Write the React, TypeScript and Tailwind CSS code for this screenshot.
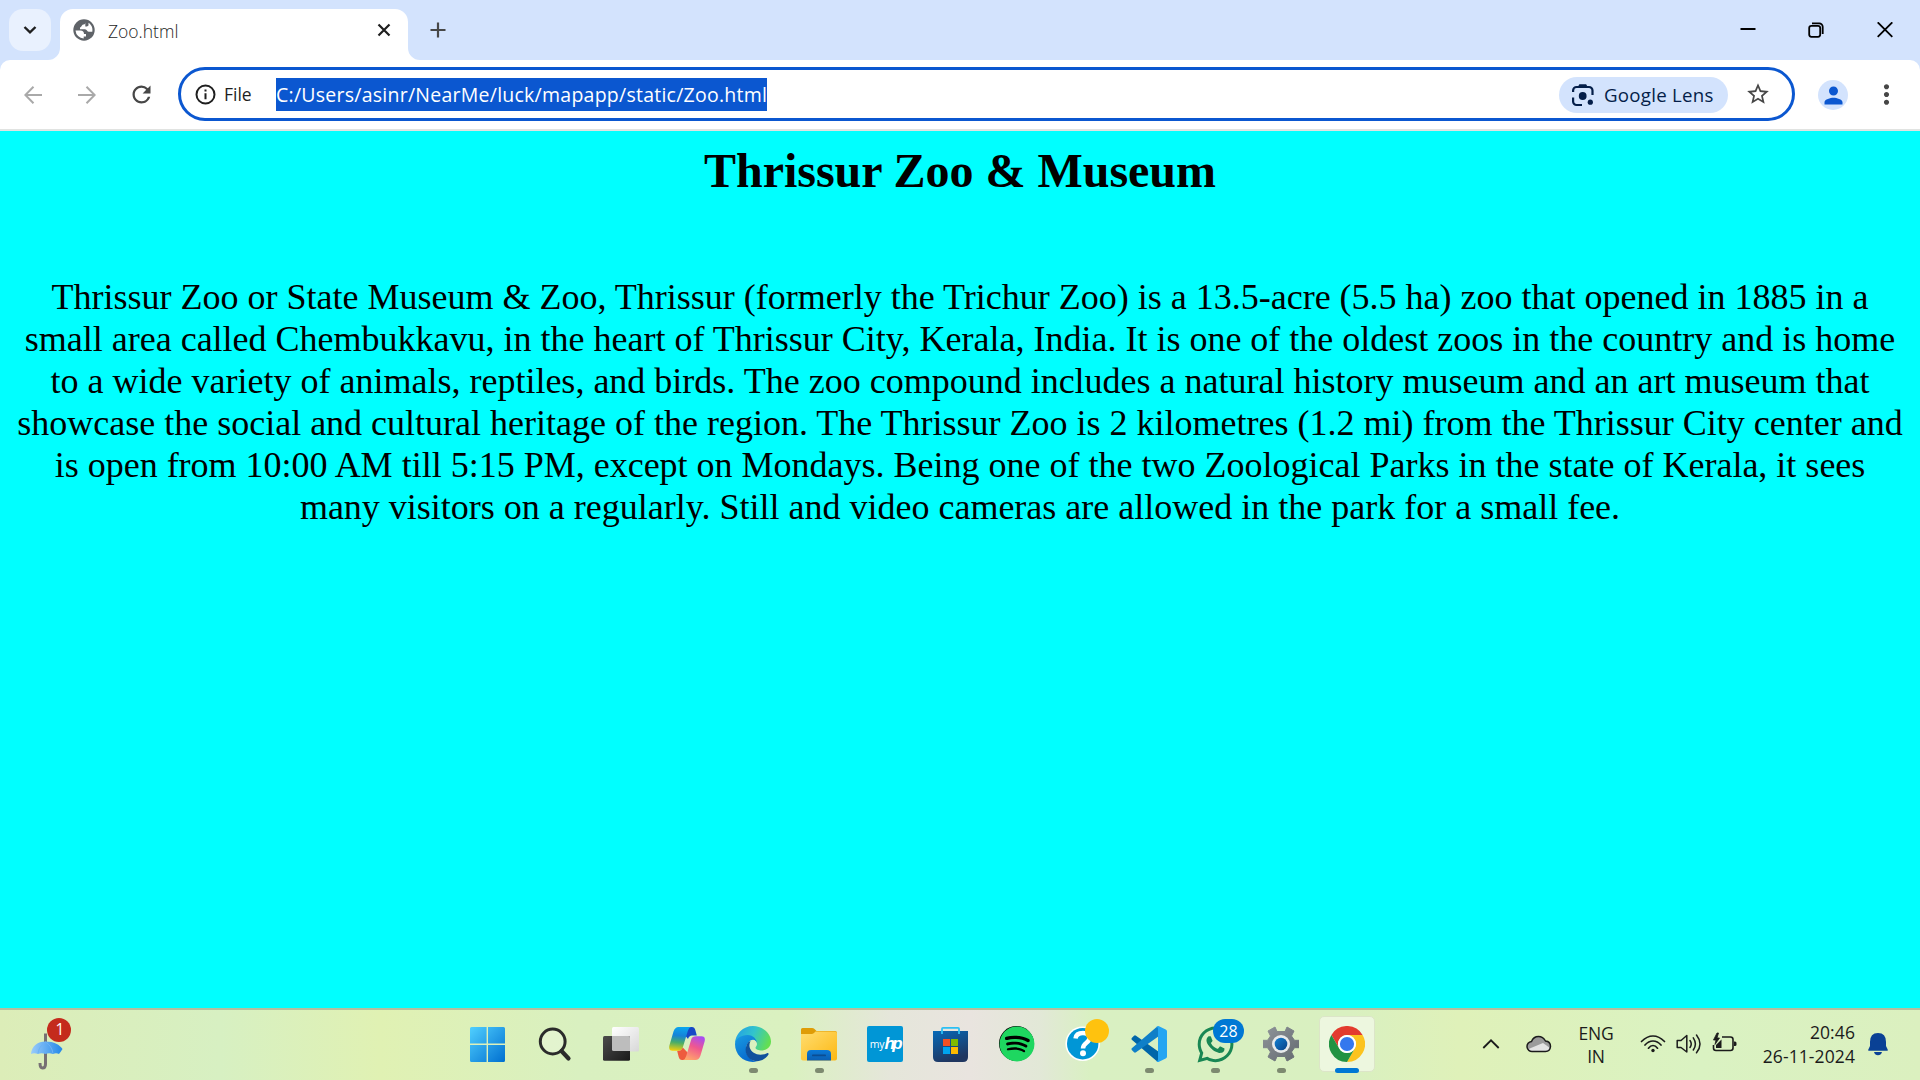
import React from "react";
import { MdRefresh, MdPerson, MdStarBorder, MdMoreVert } from "react-icons/md";
import { FaSpotify, FaWhatsapp } from "react-icons/fa";

const UI = "font-['Open_Sans','Noto_Sans',sans-serif]";

const LINES = [
  "Thrissur Zoo or State Museum & Zoo, Thrissur (formerly the Trichur Zoo) is a 13.5-acre (5.5 ha) zoo that opened in 1885 in a",
  "small area called Chembukkavu, in the heart of Thrissur City, Kerala, India. It is one of the oldest zoos in the country and is home",
  "to a wide variety of animals, reptiles, and birds. The zoo compound includes a natural history museum and an art museum that",
  "showcase the social and cultural heritage of the region. The Thrissur Zoo is 2 kilometres (1.2 mi) from the Thrissur City center and",
  "is open from 10:00 AM till 5:15 PM, except on Mondays. Being one of the two Zoological Parks in the state of Kerala, it sees",
  "many visitors on a regularly. Still and video cameras are allowed in the park for a small fee.",
];

function TitleBar() {
  return (
    <header className="flex h-[60px] w-full items-start bg-[#d3e3fd]">
      <button className="mt-[9px] ml-[9px] flex h-[42px] w-[42px] items-center justify-center rounded-[14px] bg-[#e9f1fe]">
        <svg width="14" height="10" viewBox="0 0 14 10" fill="none" stroke="#1f1f1f" strokeWidth="2.4"><path d="M1.5 2 7 7.3 12.500 2" /></svg>
      </button>
      <svg className="mt-[48px] -ml-[3px]" width="12" height="12" viewBox="0 0 12 12"><path d="M12 0A12 12 0 0 1 0 12H12Z" fill="#fff" /></svg>
      <div className="mt-[9px] flex h-[51px] w-[348px] rounded-t-[13px] bg-white">
        <svg className="mt-[10px] ml-[13px] shrink-0" width="22" height="22" viewBox="0 0 22 22">
          <circle cx="11" cy="11" r="10.700" fill="#5f6368" />
          <path d="M2.500 11.500H7.500C9.800 11.500 11 12.700 11 15H13V17.500H10.700V19.500A8.700 8.700 0 0 1 2.500 11.500Z" fill="#fff" />
          <path d="M12.500 2.700C12.500 5 11.500 5.500 10 5.500C8.500 6 8.800 8.200 7 8.500V10.200H12C14 10.200 14 12.800 16 12.800H19.300C20 9 18.500 5.500 15.500 3.700V6.500L14 7.500H12.300V5.500Z" fill="#fff" />
        </svg>
        <span className={`mt-[8px] ml-[13px] text-[17.500px] leading-[29px] font-light text-[#1f1f1f] ${UI}`}>Zoo.html</span>
        <svg className="mt-[14px] mr-[17px] ml-auto" width="14" height="14" viewBox="0 0 14 14" stroke="#1f1f1f" strokeWidth="2.200"><path d="m1.500 1.500 11 11m0-11-11 11" /></svg>
      </div>
      <svg className="mt-[48px]" width="12" height="12" viewBox="0 0 12 12"><path d="M0 0A12 12 0 0 0 12 12H0Z" fill="#fff" /></svg>
      <svg className="mt-[22px] ml-[10px]" width="16" height="16" viewBox="0 0 16 16" stroke="#474747" strokeWidth="2.200"><path d="M8 .5v15M.5 8h15" /></svg>
      <div className="mt-[22px] mr-[27px] ml-auto flex items-start text-black">
        <svg width="16" height="16" viewBox="0 0 16 16" stroke="currentColor" strokeWidth="2"><path d="M.5 7h15" /></svg>
        <svg className="ml-[52px]" width="16" height="16" viewBox="0 0 16 16" fill="none" stroke="currentColor" strokeWidth="1.800"><rect x="1.200" y="3.900" width="11" height="10.900" rx="2.200" /><path d="M4 1.300H11.200A3.500 3.500 0 0 1 14.700 4.800V12" /></svg>
        <svg className="ml-[53px]" width="16" height="16" viewBox="0 0 16 16" stroke="currentColor" strokeWidth="1.800"><path d="m.7.300 14.600 14.600M15.300.300.7 14.900" /></svg>
      </div>
    </header>
  );
}

function Toolbar() {
  return (
    <div className="bg-[#d3e3fd]">
      <div className="flex h-[71px] w-full items-start rounded-t-[10px] border-b-2 border-[#e1e3e1] bg-white">
        <svg className="mt-[26px] ml-[24px]" width="18" height="18" viewBox="0 0 18 18" fill="none" stroke="#a9a9a9" strokeWidth="2"><path d="M18 9H1.500M9.500.800 1.300 9l8.200 8.200" /></svg>
        <svg className="mt-[26px] ml-[36px]" width="18" height="18" viewBox="0 0 18 18" fill="none" stroke="#a9a9a9" strokeWidth="2"><path d="M0 9h16.500M8.500.800 16.700 9l-8.200 8.200" /></svg>
        <MdRefresh className="mt-[21px] ml-[32px] text-[#474747]" size={27} />
        <div className="mt-[7px] ml-[23px] flex h-[54px] w-[1617px] items-center rounded-full border-[3px] border-[#0b57d0] bg-white">
          <svg className="ml-[14px]" width="21" height="21" viewBox="0 0 21 21" fill="none" stroke="#1f1f1f" strokeWidth="2"><circle cx="10.500" cy="10.500" r="9" /><path d="M10.500 9.300v6M10.500 5.500v2" /></svg>
          <span className={`mt-px ml-[8px] w-[27px] text-[17.500px] whitespace-nowrap text-[#1f1f1f] ${UI}`}>File</span>
          <span className={`ml-[25px] h-[33px] w-[491px] bg-[#0b57d0] text-[19.500px] leading-[33px] tracking-[0.250px] whitespace-nowrap text-white ${UI}`}>C:/Users/asinr/NearMe/luck/mapapp/static/Zoo.html</span>
          <div className="mt-px mr-[17px] ml-auto flex h-[36px] w-[169px] items-center rounded-full bg-[#d3e3fd] text-[#041e49]">
            <svg className="ml-[12px]" width="24" height="24" viewBox="0 0 24 24" fill="none" stroke="currentColor" strokeWidth="2.200">
              <path d="M2.100 9V7.500A3.500 3.500 0 0 1 5.600 4H18A3.500 3.500 0 0 1 21.500 7.500V12M2.100 14.500V18.500A3.500 3.500 0 0 0 5.600 22H11" />
              <path d="M8 4 9 2.300h5.500L15.500 4" /><circle cx="11.700" cy="13" r="3.900" fill="currentColor" stroke="none" /><circle cx="19.300" cy="19.200" r="2.600" fill="currentColor" stroke="none" />
            </svg>
            <span className={`mt-px ml-[9px] text-[18.700px] tracking-[0.250px] whitespace-nowrap ${UI}`}>Google Lens</span>
          </div>
          <MdStarBorder className="mr-[21px] text-[#474747]" size={26} />
        </div>
        <div className="mt-[20px] ml-[23px] flex h-[30px] w-[30px] items-center justify-center rounded-full bg-[#d3e3fd]"><MdPerson className="text-[#0b57d0]" size={27} /></div>
        <MdMoreVert className="mt-[19px] ml-[23px] text-[#474747]" size={31} />
      </div>
    </div>
  );
}

const icon = { width: 36, height: 36, viewBox: "0 0 36 36" };

function StartIcon() {
  return (
    <svg {...icon}>
      <defs><linearGradient id="st" x1="1" y1="1" x2="36" y2="36" gradientUnits="userSpaceOnUse"><stop stopColor="#50d0ff" /><stop offset="1" stopColor="#006fd0" /></linearGradient></defs>
      <path fill="url(#st)" d="M2.500 1H17.600V17.600H1V2.500Q1 1 2.500 1ZM19 1H34.500Q36 1 36 2.500V17.600H19ZM1 19H17.600V36H2.500Q1 36 1 34.500ZM19 19H36V34.500Q36 36 34.500 36H19Z" />
    </svg>
  );
}
function SearchIcon() {
  return <svg {...icon} fill="none" stroke="#2b2b2b"><circle cx="15.700" cy="15.500" r="12.400" strokeWidth="3" fill="#fff" fillOpacity=".25" /><path d="m24.500 25 7 7.500" strokeWidth="4.200" strokeLinecap="round" /></svg>;
}
function TaskViewIcon() {
  return (
    <svg {...icon}>
      <defs>
        <linearGradient id="tv" x1="0" y1="0" x2="1" y2="1"><stop stopColor="#4c4c4c" /><stop offset="1" stopColor="#191919" /></linearGradient>
        <linearGradient id="tw" x1="0" y1="0" x2="1" y2="1"><stop stopColor="#fff" /><stop offset="1" stopColor="#d8d8d8" /></linearGradient>
      </defs>
      <rect x="9" y="1" width="27" height="24.500" rx="1.500" fill="url(#tw)" /><rect y="10" width="27" height="24.700" rx="1.500" fill="url(#tv)" /><path d="M9 10H25.500Q27 10 27 11.500V25H10.500Q9 25 9 23.500Z" fill="#bdbdbd" />
    </svg>
  );
}
function CopilotIcon() {
  return (
    <svg {...icon}>
      <defs>
        <linearGradient id="ca" x1=".4" y1="0" x2=".3" y2="1"><stop stopColor="#0ba5ee" /><stop offset=".35" stopColor="#1583d8" /><stop offset=".65" stopColor="#49ad68" /><stop offset="1" stopColor="#f5cf0b" /></linearGradient>
        <linearGradient id="cb" x1=".7" y1="0" x2=".3" y2="1"><stop stopColor="#a94df0" /><stop offset=".45" stopColor="#f0588e" /><stop offset="1" stopColor="#ffa66a" /></linearGradient>
      </defs>
      <path d="M17 1H23Q25.500 1 26.300 4L27.800 9.500H23Q20 9.500 19 13L15 8Z" fill="#1748c6" />
      <path d="M9.500 1H22Q19.800 1.500 18.800 5L13.800 21.500Q12.800 24.800 9 24.800H3.500Q-.8 24.800.4 19.500L4.500 5.500Q6 1 9.500 1Z" fill="url(#ca)" />
      <path d="M19 34H13Q10.500 34 9.700 31L8.200 25Q12.600 25 13.800 21.500L19 27Z" fill="#ee5b3e" />
      <path d="M26.500 34H14Q16.200 33.500 17.200 30L22.200 13.500Q23.200 10.200 27 10.200H32.500Q36.800 10.200 35.600 15.500L31.500 29.500Q30 34 26.500 34Z" fill="url(#cb)" />
    </svg>
  );
}
function EdgeIcon() {
  return (
    <svg {...icon}>
      <defs>
        <linearGradient id="ea" x1="0" y1=".2" x2="1" y2=".5"><stop stopColor="#229fe6" /><stop offset=".5" stopColor="#32c4cc" /><stop offset="1" stopColor="#64df50" /></linearGradient>
        <linearGradient id="eb" x1="0" y1="0" x2=".5" y2="1"><stop stopColor="#1a9ce2" /><stop offset="1" stopColor="#0669cd" /></linearGradient>
      </defs>
      <path d="M0 18C0 8 8 0 18 0S36 7.500 36 15.500C36 21 31.500 24.500 27 24.500C23.500 24.500 20.500 23.500 20.500 21.800C20.500 20.600 22 20 22 18C22 14.500 18 11 12 11C6 11 1 14 0 18Z" fill="url(#ea)" />
      <path d="M0 18C.5 12.500 6 9 12.500 9C18.500 9 22 13.500 22 17.800C22 15.500 20 13.800 18 13.800C14.500 13.800 11 18.500 11 23C11 29.500 16 35 22 35.500C10 38 0 29.500 0 18Z" fill="url(#eb)" />
      <path d="M13.500 16C10.500 19.500 8.500 27 14.500 32.500C21 38 30 34.500 33.500 28.500C34 27.300 33 26.700 32 27.200C25 30.500 16.500 28 14.700 21.500C14.200 19.200 14.400 17.500 15.500 15Z" fill="#10519d" />
    </svg>
  );
}
function ExplorerIcon() {
  return (
    <svg {...icon}>
      <defs><linearGradient id="fa" x1="0" y1="0" x2="1" y2="1"><stop stopColor="#ffdd70" /><stop offset="1" stopColor="#fdb813" /></linearGradient><linearGradient id="fb" x1="0" y1="0" x2="0" y2="1"><stop stopColor="#0a7ad8" /><stop offset="1" stopColor="#0c5fb2" /></linearGradient></defs>
      <path d="M0 3.500Q0 2 1.500 2H11Q12.500 2 13.500 3L15.500 5H34Q36 5 36 7V15H0Z" fill="#df9c07" />
      <path d="M0 8H10.500Q12 8 13 7L14.500 5.500H34Q36 5.500 36 7.500V32.500Q36 34.500 34 34.500H2Q0 34.500 0 32.500Z" fill="url(#fa)" />
      <path d="M6 34.500V28Q6 24 10 24H26Q30 24 30 28V34.500Z" fill="url(#fb)" /><rect x="11" y="28.500" width="14" height="1.800" rx=".9" fill="#0b4d92" />
    </svg>
  );
}
function MyHpIcon() {
  return (
    <div className="flex h-[36px] w-[36px] items-center justify-center rounded-[2px] bg-[#0096d6] text-white">
      <span className="mt-[1px] font-['Open_Sans',sans-serif] text-[10.500px] leading-none tracking-[-0.2px]">my</span>
      <span className="-mt-[1px] inline-block font-['Liberation_Sans_Narrow','Liberation_Sans',sans-serif] text-[17px] leading-none font-bold tracking-[-2.500px] italic">hp</span>
    </div>
  );
}
function StoreIcon() {
  return (
    <svg {...icon}>
      <defs><linearGradient id="sa" x1="0" y1="0" x2=".4" y2="1"><stop stopColor="#0669b8" /><stop offset="1" stopColor="#203660" /></linearGradient></defs>
      <path d="M0 5H35V31Q35 36 30 36H5Q0 36 0 31Z" fill="url(#sa)" />
      <path d="M9 8V2.800Q9 1.800 10 1.800H25Q26 1.800 26 2.800V8" fill="none" stroke="#2cc0f4" strokeWidth="1.800" />
      <path d="M10 13h7v7h-7z" fill="#f25022" /><path d="M18 13h7v7h-7z" fill="#7fba00" /><path d="M10 21h7v7h-7z" fill="#00a4ef" /><path d="M18 21h7v7h-7z" fill="#ffb900" />
    </svg>
  );
}
function SpotifyIcon() {
  return <div className="flex h-[35px] w-[35px] items-center justify-center rounded-full bg-black"><FaSpotify size={36} className="shrink-0 text-[#1ed760]" /></div>;
}
function HelpIcon() {
  return (
    <svg {...icon} className="overflow-visible">
      <circle cx="17.700" cy="17.700" r="17.300" fill="#fff" /><circle cx="17.700" cy="17.700" r="15.700" fill="#0096d6" />
      <path d="M10.500 12.500C11 8.500 14 7 18 7C22 7 24.500 9 24.500 12C24.500 17 18 16.500 18 22.500" fill="none" stroke="#fff" strokeWidth="4.500" /><circle cx="18" cy="27.300" r="3" fill="#fff" />
      <circle cx="32" cy="5" r="12" fill="#ffc20e" />
    </svg>
  );
}
function CodeIcon() {
  return (
    <svg {...icon}>
      <path d="M.8 12 3 9.700Q4 9 5 9.700L28 26V34.500Q26.500 36 25 34.500L.8 13.800Q0 13 .8 12Z" fill="#0065a9" />
      <path d="M.8 24 3 26.300Q4 27 5 26.300L28 10V1.500Q26.500 0 25 1.500L.8 22.200Q0 23 .8 24Z" fill="#0f7fc8" />
      <path d="M25.200 35.500Q27 36.500 28 35.800L34.700 32.500Q36 31.800 36 30.500V5.500Q36 4.200 34.700 3.500L28 .2Q27-.3 25.200 1Q27 .8 27 2.500V33.500Q27 35.200 25.200 35.500Z" fill="#24a5f2" />
    </svg>
  );
}
function WhatsAppIcon() {
  return (
    <div className="relative h-[36px] w-[36px]">
      <FaWhatsapp className="-mt-[2px] -ml-[2px] text-[#198754]" size={41} />
      <span className={`absolute -top-[7px] left-[16px] flex h-[24px] w-[31px] items-center justify-center rounded-full bg-[#0078d4] text-[16px] text-white ${UI}`}>28</span>
    </div>
  );
}
function SettingsIcon() {
  return (
    <svg {...icon}>
      <defs><linearGradient id="ga" x1="0" y1="0" x2="1" y2="1"><stop stopColor="#8e9499" /><stop offset="1" stopColor="#646a70" /></linearGradient><linearGradient id="gb" x1="0" y1="0" x2="1" y2="1"><stop stopColor="#1181d3" /><stop offset="1" stopColor="#0b4287" /></linearGradient></defs>
      <path d="M12 1 14 5.500H22L24 1 31 5 28.500 10 31.500 14.300H36V21.700H31.500L28.500 26 31 31 24 35 22 30.500H14L12 35 5 31 7.500 26 4.500 21.700H0V14.300H4.500L7.500 10 5 5Z" fill="url(#ga)" stroke="url(#ga)" strokeLinejoin="round" />
      <circle cx="18" cy="18" r="9" fill="#e8eaeb" /><circle cx="18" cy="18" r="6.300" fill="url(#gb)" />
    </svg>
  );
}
function ChromeIcon() {
  return (
    <svg {...icon}>
      <path d="M2.400 9A18 18 0 0 1 33.600 9H18A9 9 0 0 0 10.200 22.500Z" fill="#e33b2e" />
      <path d="M33.600 9A18 18 0 0 1 18 36L25.800 22.500A9 9 0 0 0 18 9Z" fill="#fcc31e" />
      <path d="M18 36A18 18 0 0 1 2.400 9L10.200 22.500A9 9 0 0 0 25.800 22.500Z" fill="#229342" />
      <circle cx="18" cy="18" r="9" fill="#fff" /><circle cx="18" cy="18" r="7.100" fill="#3478ee" />
    </svg>
  );
}

const APPS: { Icon: () => React.ReactElement; state?: "open" | "active" }[] = [
  { Icon: StartIcon }, { Icon: SearchIcon }, { Icon: TaskViewIcon }, { Icon: CopilotIcon },
  { Icon: EdgeIcon, state: "open" }, { Icon: ExplorerIcon, state: "open" }, { Icon: MyHpIcon }, { Icon: StoreIcon },
  { Icon: SpotifyIcon }, { Icon: HelpIcon }, { Icon: CodeIcon, state: "open" }, { Icon: WhatsAppIcon, state: "open" },
  { Icon: SettingsIcon, state: "open" }, { Icon: ChromeIcon, state: "active" },
];

function Weather() {
  return (
    <div className="relative h-[72px] w-[454px]">
      <svg className="mt-[24px] ml-[30px]" width="36" height="40" viewBox="0 0 36 40">
        <defs><linearGradient id="um" x1="0" y1="0" x2="1" y2="0"><stop stopColor="#9accfb" /><stop offset="1" stopColor="#2388e8" /></linearGradient></defs>
        <path d="M15.500 1.500V32Q15.500 36 12.500 36Q10 36 10 31" fill="none" stroke="#777074" strokeWidth="3" />
        <path d="M1 23C1.500 15 8 10.500 15.500 10.500C24 10.500 30 14 32.500 18Q31 20.500 29 23Q26 21.500 23 23Q19 21.500 15.500 23Q11.500 21.500 8 23Q4 21.500 1 23Z" fill="url(#um)" className="-translate-y-px" />
        <path d="M15.500 10Q9 14 8 21.500M15.500 10Q22 14 23 21.500" fill="none" stroke="#6cb2f5" />
      </svg>
      <span className={`absolute top-[10px] left-[47px] flex h-[24px] w-[24px] items-center justify-center rounded-full bg-[#c42b1c] pl-[2px] text-[15.500px] text-white ${UI}`}>1</span>
    </div>
  );
}

function Tray() {
  return (
    <div className={`flex h-[72px] flex-1 items-start text-[#1b1b1b] ${UI}`}>
      <svg className="mt-[30px] ml-[102px]" width="18" height="12" viewBox="0 0 18 12" fill="none" stroke="currentColor" strokeWidth="1.800"><path d="m1.300 10 7.700-7.700 7.700 7.700" /></svg>
      <svg className="mt-[27px] ml-[26px]" width="26" height="18" viewBox="0 0 26 18">
        <path d="M6.500 16.500A5 5 0 0 1 5.500 6.500Q7.500 1.500 12.500 1.500Q17 1.500 19.500 6Q24.500 6.500 24.500 11.500Q24 16.500 19.500 16.500Z" fill="#9b9b9b" />
        <path d="M2.500 14 17 8 24 13Q23 16.500 19.500 16.500H6.500Q3.500 16.500 2.500 14Z" fill="#e3e3e3" />
        <path d="M6.500 16.500A5 5 0 0 1 5.500 6.500Q7.500 1.500 12.500 1.500Q17 1.500 19.500 6Q24.500 6.500 24.500 11.500Q24 16.500 19.500 16.500Z" fill="none" stroke="#1b1b1b" strokeWidth="1.500" />
      </svg>
      <div className="mt-[14px] ml-[24px] w-[40px] text-center text-[17.500px] leading-[23px] tracking-[-0.2px]"><div>ENG</div><div>IN</div></div>
      <svg className="mt-[26px] ml-[24px]" width="26" height="20" viewBox="0 0 26 20" fill="none" stroke="currentColor" strokeWidth="1.700" strokeLinecap="round">
        <path d="M1.500 7.500Q7 2 13 2T24.500 7.500M5 11Q8.500 7 13 7T21 11M8.500 14.200Q10.500 11.500 13 11.500T17.500 14.200" /><circle cx="13" cy="16.500" r="1.700" fill="currentColor" stroke="none" />
      </svg>
      <svg className="mt-[25px] ml-[10px]" width="26" height="22" viewBox="0 0 26 22" fill="none" stroke="currentColor" strokeWidth="1.500" strokeLinejoin="round" strokeLinecap="round">
        <path d="M1.200 7.500H5L10.800 2.500V19L5 14.500H1.200ZM14 7.500Q16.500 11 14 14.500M17.300 4.800Q21.500 11 17.300 17M20.500 2Q27.500 11 20.500 19.800" />
      </svg>
      <svg className="mt-[24px] ml-[10px]" width="26" height="22" viewBox="0 0 26 22" fill="none" stroke="currentColor" strokeWidth="1.600">
        <path d="M10 5H18.500Q21 5 21 7.500V16Q21 18.500 18.500 18.500H4Q1.500 18.500 1.500 16V13" /><path d="M22 9.500H23Q24.500 9.500 24.500 11V12.500Q24.500 14 23 14H22Z" fill="currentColor" stroke="none" />
        <path d="M5 1 1.500 8H4L3 12.500 7.500 6H5L6.500 1Z" fill="currentColor" strokeWidth=".8" /><path d="M4 16V13L9.500 7.500V16Z" fill="currentColor" stroke="none" />
      </svg>
      <div className="mt-[12px] ml-[21px] w-[96px] text-right text-[17.500px] leading-[24px] tracking-[0.100px] whitespace-nowrap"><div>20:46</div><div>26-11-2024</div></div>
      <svg className="mt-[24px] ml-[12px]" width="22" height="24" viewBox="0 0 22 24" fill="#0a4195"><path d="M3 10Q3 1 11 1T19 10V14L20.700 17.500V18.700H1.300V17.500L3 14ZM7 20H15Q14 23.300 11 23.300T7 20Z" /></svg>
    </div>
  );
}

function Taskbar() {
  return (
    <footer className="flex h-[72px] w-full bg-[linear-gradient(90deg,#dcedb8_0px,#d7f0c2_220px,#e0f1b3_380px,#d9f0c0_580px,#daf1c0_790px,#e5e6da_890px,#e9e4df_970px,#e2e8d7_1040px,#d9f0c2_1090px,#d9f0c0_1350px,#dff1b9_1460px,#daf2c2_1700px,#dbf0bf_1920px)] shadow-[inset_0_2px_0_#b3bf9f]">
      <Weather />
      <nav className="flex w-[926px]">
        {APPS.map(({ Icon, state }, i) => (
          <div key={i} className="relative flex h-[72px] w-[66px] items-center justify-center first:mr-[2px]">
            {state === "active" && <span className="absolute top-[8px] left-[5px] h-[56px] w-[56px] rounded-[5px] border border-[#dce5c8] bg-[#edf7df]" />}
            <div className="relative flex h-[36px] w-[36px]"><Icon /></div>
            {state === "open" && <span className="absolute top-[60px] left-[28.500px] h-[5px] w-[9px] rounded-full bg-[#7d8a70]" />}
            {state === "active" && <span className="absolute top-[60px] left-[21px] h-[5px] w-[24px] rounded-full bg-[#0078d4]" />}
          </div>
        ))}
      </nav>
      <Tray />
    </footer>
  );
}

export default function App() {
  return (
    <div className="flex h-[1080px] w-[1920px] flex-col overflow-hidden">
      <TitleBar />
      <Toolbar />
      <main className="flex flex-1 flex-col items-center bg-[#00ffff] font-['Liberation_Serif','Times_New_Roman',serif] text-black">
        <h1 className="mt-[12px] text-[48px] leading-[55px] font-bold tracking-[-0.030px] whitespace-nowrap">Thrissur Zoo &amp; Museum</h1>
        <div className="mt-[78px] text-center text-[36px] leading-[42px] whitespace-nowrap">
          {LINES.map((line) => <div key={line}>{line}</div>)}
        </div>
      </main>
      <Taskbar />
    </div>
  );
}
